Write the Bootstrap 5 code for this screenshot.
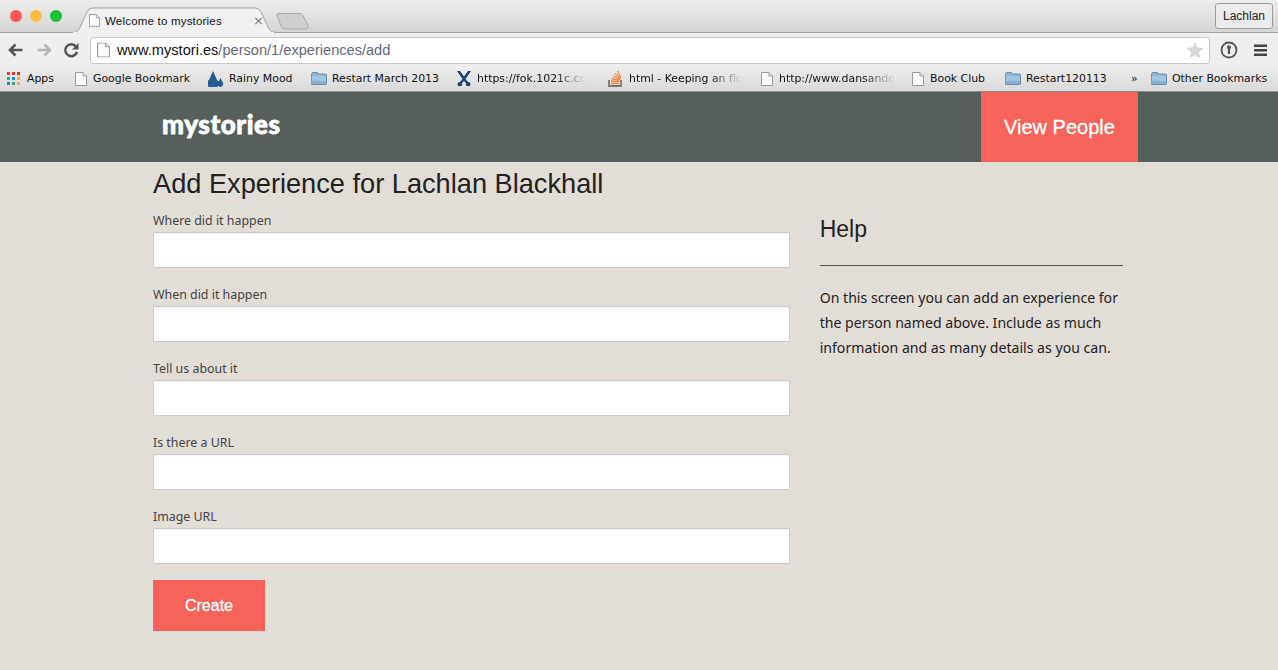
<!DOCTYPE html>
<html lang="en">
<head>
<meta charset="utf-8">
<title>Welcome to mystories</title>
<link href="https://cdn.jsdelivr.net/npm/bootstrap@5.3.0/dist/css/bootstrap.min.css" rel="stylesheet">
<style>
html,body{height:100%;overflow:hidden}
body{background:#e2ddd7;font-family:"Noto Sans",sans-serif;color:#222}
.chrome-ui{font-family:"DejaVu Sans",sans-serif;color:#111}
.tabstrip{height:33px;background:linear-gradient(#ededed,#d4d4d4);border-bottom:1px solid #a3a3a3}
.lights{padding:10px 0 0 10px;gap:8px;width:72px}
.lights i{width:12px;height:12px;border-radius:50%;display:block}
.tab-one{width:204px;height:32px;position:relative;padding:14px 0 0 17px;line-height:14px}
.tab-one svg.shape{position:absolute;left:0;top:0}
.tab-one .fav{position:relative;vertical-align:top}
.tab-title{position:relative;font-family:"Liberation Sans",sans-serif;font-size:11.5px;letter-spacing:.2px;margin-left:5px;vertical-align:top}
.tab-x{position:absolute;right:12px;top:14px;color:#777;font-size:13px;line-height:1}
.newtab{margin:13px 0 0 0}
.who{margin:3px 5px 0 auto;height:26px;width:58px;border:1px solid #9c9c9c;border-radius:3px;background:#ececec;font-family:"Liberation Sans",sans-serif;font-size:12px;line-height:24px;text-align:center;color:#222}
.toolbar{height:33px;background:#efefef;padding:4px 0 0 7px}
.navicon{width:18px;height:18px;margin-top:4px;flex:none}
.gap-nav{margin-left:10px}
.omni{width:1120px;height:27px;background:#fff;border:1px solid #c8c8c8;border-radius:3px;margin-left:9px;padding:0 5px 0 6px;font-family:"Liberation Sans",sans-serif;font-size:14.6px;line-height:25px;color:#667}
.omni b{font-weight:400;color:#111}
.omni-doc{margin:4px 7px 0 0}
.omni-star{margin-left:auto;margin-top:3px}
.bookmarks{height:26px;background:linear-gradient(#ededed,#d9d9d9);border-bottom:1px solid #8f8f8f;padding-left:7px;font-size:10.9px;line-height:24px;white-space:nowrap}
.bm{display:flex;align-items:center;flex:none}
.bm svg{flex:none}
.bm-fade span{display:block;-webkit-mask-image:linear-gradient(90deg,#000 72%,transparent);mask-image:linear-gradient(90deg,#000 72%,transparent)}
.masthead{height:70px;background:#555f5b}
.page-wrap{width:1000px;margin-left:138px}
.brand-word{font-family:"Lato",sans-serif;font-weight:900;font-size:26px;line-height:65px;color:#fff;padding-left:24px;letter-spacing:.6px;-webkit-text-stroke:.8px #fff;text-decoration:none}
.coral-btn{background:#f6635a;color:#fff;font-family:"Liberation Sans",sans-serif;border:0;border-radius:0;text-decoration:none;text-align:center}
.coral-btn:hover{background:#f6635a;color:#fff}
.people{width:157px;height:70px;line-height:70px;font-size:20px;-webkit-text-stroke:.3px #fff;padding:0}
.colpad{padding-left:15px;padding-right:15px}
.page-title{font-family:"Liberation Sans",sans-serif;font-size:27.2px;line-height:34px;margin:5px 0 0;color:#222;font-weight:400}
.field{height:74px;padding-top:12px}
.field-label{font-size:12.4px;line-height:16px;color:#444;margin:0 0 3px;display:block}
.field-input{height:36px;border:1px solid #ccc;border-radius:0;background:#fff;padding:6px 10px;box-shadow:inset 0 1px 1px rgba(0,0,0,.05)}
.create{display:block;width:112px;height:51px;line-height:51px;padding:0;font-size:16px;-webkit-text-stroke:.3px #fff;margin-top:9px}
.help-title{font-family:"Liberation Sans",sans-serif;font-size:23px;line-height:28px;margin:53px 0 0;font-weight:400;color:#222}
.help-rule{border:0;border-top:1px solid #555;opacity:1;margin:22px 0 19px}
.help-text{font-size:14.1px;line-height:25px;color:#222;margin:0}
</style>
</head>
<body>
<svg width="0" height="0" class="position-absolute">
<defs>
<symbol id="doc" viewBox="0 0 12 14"><path d="M.5.5h7.500l3.500 3.500v9.500h-11z" fill="#fbfbfb" stroke="#9a9a9a"/><path d="M8 .5v3.500h3.500" fill="#eee" stroke="#9a9a9a"/></symbol>
<symbol id="folder" viewBox="0 0 16 13"><path d="M.5 2.500q0-2 1.500-2h4q1 0 1.500 1.500h7q1 0 1 1v9q0 .5-1 .5h-14q-.5 0-.5-.5z" fill="#8fb8d6" stroke="#6d8ca5"/><path d="M1 4h14v8H1z" fill="#a4c7e0" opacity=".8"/><path d="M1 9h14v3H1z" fill="#7fa9c9" opacity=".7"/></symbol>
</defs>
</svg>
<div class="chrome-ui">
<div class="tabstrip d-flex">
<div class="lights d-flex"><i style="background:#fc5753"></i><i style="background:#fdbc40"></i><i style="background:#19c332"></i></div>
<div class="tab-one">
<svg class="shape" width="204" height="33" viewBox="0 0 204 33"><path d="M0 32.500c5 0 6-1 8-5L15 12q2-4 5-4h164q3 0 5 4l7 15q2 5 7 5.500" fill="#f1f1f1" stroke="#a3a3a3"/><path d="M1 33h201v-1H1z" fill="#f1f1f1"/></svg>
<svg class="fav" width="11" height="13"><use href="#doc"/></svg><span class="tab-title">Welcome to mystories</span>
<span class="tab-x">×</span>
</div>
<svg class="newtab" width="33" height="17" viewBox="0 0 33 17"><path d="M2 .5h21q3 0 4 2l5 10q1 3-2 3.500H9q-3 0-4-3L1 2q0-1.500 1-1.500z" fill="#cfcfcf" stroke="#a6a6a6"/></svg>
<div class="who">Lachlan</div>
</div>
<div class="toolbar d-flex">
<svg class="navicon" viewBox="0 0 18 18"><path d="M15.500 9H3M8.500 3.500 3 9l5.500 5.500" fill="none" stroke="#555" stroke-width="2.600"/></svg>
<svg class="navicon gap-nav" viewBox="0 0 18 18"><path d="M2.500 9H15M9.500 3.500 15 9l-5.500 5.500" fill="none" stroke="#b5b5b5" stroke-width="2.600"/></svg>
<svg class="navicon gap-nav" viewBox="0 0 18 18"><path d="M14 11a6 6 0 1 1-1-5.500" fill="none" stroke="#555" stroke-width="2.500"/><path d="M15.500 2v6.500H9z" fill="#555"/></svg>
<div class="omni d-flex">
<svg class="omni-doc" width="13" height="16" viewBox="0 0 12 14"><use href="#doc"/></svg>
<span><b>www.mystori.es</b>/person/1/experiences/add</span>
<svg class="omni-star" width="18" height="18" viewBox="0 0 18 18"><path d="m9 .8 2.500 5.700 6.200.6-4.700 4.100 1.400 6.100L9 14.200l-5.400 3.100L5 11.200.3 7.100l6.200-.6z" fill="#d6d6d6"/></svg>
</div>
<svg class="navicon gap-nav" viewBox="0 0 18 18"><circle cx="9" cy="9" r="7.500" fill="none" stroke="#555" stroke-width="1.800"/><circle cx="9" cy="6.300" r="2" fill="#555"/><path d="M7.900 7.500h2.200v5.500H7.900z" fill="#555"/></svg>
<svg class="navicon" style="margin-left:13px" viewBox="0 0 18 18"><path d="M3 3.500h13v2.400H3zM3 8h13v2.400H3zM3 12.500h13v2.400H3z" fill="#444"/></svg>
</div>
<div class="bookmarks d-flex">
<div class="bm" style="width:68px"><svg width="13" height="13" viewBox="0 0 13 13"><rect width="3" height="3" fill="#e33"/><rect x="5" width="3" height="3" fill="#e33"/><rect x="10" width="3" height="3" fill="#e33"/><rect y="5" width="3" height="3" fill="#3a7"/><rect x="5" y="5" width="3" height="3" fill="#28c"/><rect x="10" y="5" width="3" height="3" fill="#fa3"/><rect y="10" width="3" height="3" fill="#28c"/><rect x="5" y="10" width="3" height="3" fill="#3a7"/><rect x="10" y="10" width="3" height="3" fill="#fa3"/></svg><span style="margin-left:7px">Apps</span></div>
<div class="bm" style="width:133px"><svg width="12" height="14"><use href="#doc"/></svg><span style="margin-left:6px">Google Bookmark</span></div>
<div class="bm" style="width:103px"><svg width="16" height="16" viewBox="0 0 16 16"><path d="M5 0 9 9a4 4 0 0 1-4 7 4 4 0 0 1-4-7zM12.500 7l2.500 5a3 3 0 0 1-2.500 4 3 3 0 0 1-2.500-4z" fill="#245c8f"/></svg><span style="margin-left:5px">Rainy Mood</span></div>
<div class="bm" style="width:145px"><svg width="16" height="13"><use href="#folder"/></svg><span style="margin-left:5px">Restart March 2013</span></div>
<div class="bm bm-fade" style="width:152px"><svg width="16" height="15" viewBox="0 0 16 15"><path d="M1 0l3 0 4 5.500L12 0h3L9.500 8l2.500 3a2.200 2.200 0 1 1-1.800 1.300L8 10l-2.200 2.300A2.200 2.200 0 1 1 4 11l2.500-3z" fill="#1e3f73"/></svg><span style="margin-left:5px">https://fok.1021c.co</span></div>
<div class="bm bm-fade" style="width:153px"><svg width="15" height="17" viewBox="0 0 15 17"><path d="M1 10v6h12v-6" fill="none" stroke="#777" stroke-width="1.800"/><path d="M3 13.500h8M3 11l8 .6M3.700 8.500l7.800 1.900M5 6l7 3.500M7 3.500l5.500 5M9.500 1l3.500 6.500" stroke="#ef8236" stroke-width="1.300"/></svg><span style="margin-left:6px">html - Keeping an flo</span></div>
<div class="bm bm-fade" style="width:151px"><svg width="12" height="14"><use href="#doc"/></svg><span style="margin-left:6px">http://www.dansande</span></div>
<div class="bm" style="width:93px"><svg width="12" height="14"><use href="#doc"/></svg><span style="margin-left:6px">Book Club</span></div>
<div class="bm" style="width:126px"><svg width="16" height="13"><use href="#folder"/></svg><span style="margin-left:5px">Restart120113</span></div>
<div class="bm" style="width:20px"><span>»</span></div>
<div class="bm"><svg width="16" height="13"><use href="#folder"/></svg><span style="margin-left:5px">Other Bookmarks</span></div>
</div>
</div>
<header class="masthead">
<div class="page-wrap d-flex justify-content-between">
<a class="brand-word" href="#">mystories</a>
<a class="coral-btn people" href="#">View People</a>
</div>
</header>
<main class="page-wrap">
<div class="row gx-0">
<div class="col-8 colpad">
<h1 class="page-title">Add Experience for Lachlan Blackhall</h1>
<form>
<div class="field"><label class="field-label">Where did it happen</label><input class="form-control field-input" type="text"></div>
<div class="field"><label class="field-label">When did it happen</label><input class="form-control field-input" type="text"></div>
<div class="field"><label class="field-label">Tell us about it</label><input class="form-control field-input" type="text"></div>
<div class="field"><label class="field-label">Is there a URL</label><input class="form-control field-input" type="text"></div>
<div class="field"><label class="field-label">Image URL</label><input class="form-control field-input" type="text"></div>
<button class="btn coral-btn create" type="button">Create</button>
</form>
</div>
<div class="col-4 colpad">
<h2 class="help-title">Help</h2>
<hr class="help-rule">
<p class="help-text">On this screen you can add an experience for the person named above. Include as much information and as many details as you can.</p>
</div>
</div>
</main>
</body>
</html>
